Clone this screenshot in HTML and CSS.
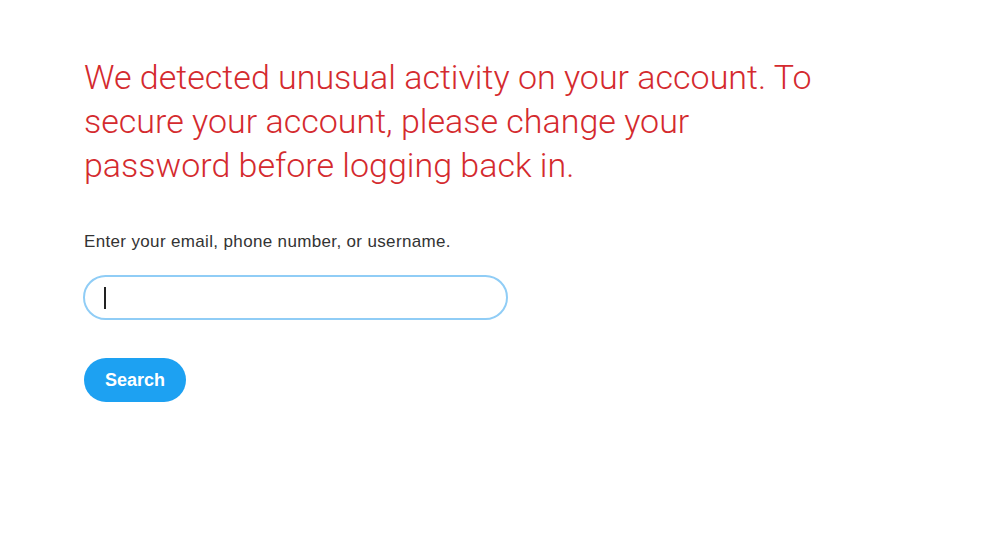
FILE: index.html
```html
<!DOCTYPE html>
<html>
<head>
<meta charset="utf-8">
<link rel="stylesheet" href="styles.css">
</head>
<body>
<main class="page">
  <h1 class="alert">We detected unusual activity on your account. To secure your account, please change your password before logging back in.</h1>
  <p class="label">Enter your email, phone number, or username.</p>
  <div class="field"><span class="caret"></span></div>
  <button class="btn">Search</button>
</main>
</body>
</html>
```
FILE: styles.css
```css
html, body { margin: 0; padding: 0; background: #fff; }
body { width: 990px; height: 534px; overflow: hidden; }
.page {
  padding: 55px 0 0 84px;
  display: flex;
  flex-direction: column;
  align-items: flex-start;
}
.alert {
  margin: 0;
  width: 740px;
  font-family: Roboto, "Liberation Sans", Arial, sans-serif;
  font-weight: 300;
  font-size: 34px;
  line-height: 44px;
  color: #d42a2e;
}
.label {
  margin: 45px 0 0 0;
  font-family: "Liberation Sans", Arial, sans-serif;
  font-size: 17px;
  letter-spacing: 0.35px;
  line-height: 20px;
  color: #333;
}
.field {
  margin-top: 23px;
  margin-left: -1px;
  box-sizing: border-box;
  width: 425px;
  height: 45px;
  border: 2px solid #90cdf6;
  border-radius: 23px;
  display: flex;
  align-items: center;
  padding-left: 19px;
}
.caret {
  width: 1.5px;
  height: 22px;
  background: #222;
}
.btn {
  margin-top: 38px;
  width: 102px;
  height: 44px;
  border: none;
  border-radius: 22px;
  background: #1da1f2;
  color: #fff;
  font-family: "Liberation Sans", Arial, sans-serif;
  font-weight: 700;
  font-size: 18px;
  padding: 0;
}
```
